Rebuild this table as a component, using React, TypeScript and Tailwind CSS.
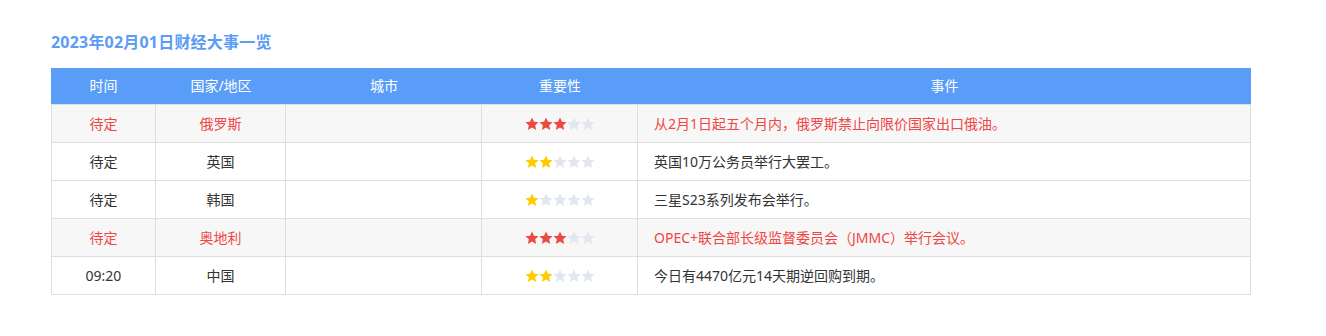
import React from 'react';

interface EventRow {
  time: string;
  country: string;
  city: string;
  level: number;
  content: string;
}

const events: EventRow[] = [
  { time: '待定', country: '俄罗斯', city: '', level: 3, content: '从2月1日起五个月内，俄罗斯禁止向限价国家出口俄油。' },
  { time: '待定', country: '英国', city: '', level: 2, content: '英国10万公务员举行大罢工。' },
  { time: '待定', country: '韩国', city: '', level: 1, content: '三星S23系列发布会举行。' },
  { time: '待定', country: '奥地利', city: '', level: 3, content: 'OPEC+联合部长级监督委员会（JMMC）举行会议。' },
  { time: '09:20', country: '中国', city: '', level: 2, content: '今日有4470亿元14天期逆回购到期。' },
];

function Star({ color }: { color: string }) {
  return (
    <svg width="14" height="14" viewBox="0 0 20 20" className="block">
      <path
        d="M10 0.6l2.8 6.1 6.6 0.7-4.9 4.5 1.4 6.6L10 15.1l-5.9 3.4 1.4-6.6L0.6 7.4l6.6-0.7L10 0.6z"
        fill={color}
      />
    </svg>
  );
}

function Stars({ level }: { level: number }) {
  // 三星及以上为重要事件，用红色
  const on = level >= 3 ? '#ea4a3f' : '#ffcc00';
  return (
    <div className="flex items-center justify-center">
      {[1, 2, 3, 4, 5].map(i => (
        <Star key={i} color={i <= level ? on : '#e1e6f1'} />
      ))}
    </div>
  );
}

export default function App() {
  return (
    <div className="min-h-[336px] bg-white pl-[51px] pt-[30px] font-['Noto_Sans','Noto_Sans_CJK_SC',sans-serif]">
      <h2 className="h-6 text-base font-bold leading-6 tracking-[0.2px] text-[#5b9cf6]">2023年02月01日财经大事一览</h2>

      <div className="mt-[14px] w-[1200px] text-sm">
        <div className="flex h-9 items-center bg-[#5a9df8] text-white">
          <div className="w-[105px] text-center">时间</div>
          <div className="w-[130px] text-center">国家/地区</div>
          <div className="w-[196px] text-center">城市</div>
          <div className="w-[156px] text-center">重要性</div>
          <div className="flex-1 text-center">事件</div>
        </div>

        <div className="border-t border-[#dedede]">
          {events.map((e, idx) => {
            const hot = e.level >= 3;
            return (
              <div
                key={idx}
                className={`flex h-[38px] border-x border-b border-[#dedede] ${
                  hot ? 'bg-[#f7f7f7] text-[#ef4646]' : 'bg-white text-[#333333]'
                }`}
              >
                <div className="flex w-[104px] items-center justify-center border-r border-[#dedede]">{e.time}</div>
                <div className="flex w-[130px] items-center justify-center border-r border-[#dedede]">{e.country}</div>
                <div className="flex w-[196px] items-center justify-center border-r border-[#dedede]">{e.city}</div>
                <div className="flex w-[156px] items-center justify-center border-r border-[#dedede]">
                  <Stars level={e.level} />
                </div>
                <div className="flex flex-1 items-center pl-4">{e.content}</div>
              </div>
            );
          })}
        </div>
      </div>
    </div>
  );
}
